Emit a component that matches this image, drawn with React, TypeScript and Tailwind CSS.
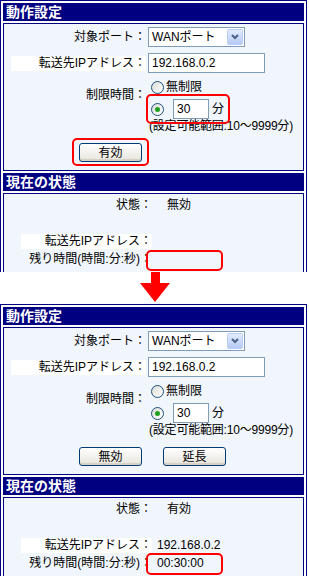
const font = "font-['Liberation_Sans','Noto_Sans_CJK_JP',sans-serif]"

function Header({ title }: { title: string }) {
    return (
        <div className="h-[18px] bg-[#000080] pl-[3px] text-[14px] font-bold leading-[18px] text-white">
            {title}
        </div>
    )
}

function Select() {
    return (
        <div className="flex h-[20px] w-[97px] items-center border border-[#7f9db9] bg-white pl-[3px] text-[12px]">
            <span className="flex-1">WANポート</span>
            <span className="mr-[1px] flex h-[16px] w-[16px] items-center justify-center rounded-[2px] border border-[#b9cdf5] bg-gradient-to-b from-[#e3ecfe] to-[#b6caf7]">
                <svg width="8" height="6" viewBox="0 0 8 6">
                    <path d="M1 1 L4 4 L7 1" fill="none" stroke="#4d6185" strokeWidth="2" />
                </svg>
            </span>
        </div>
    )
}

function TextBox({ value, width }: { value: string; width: string }) {
    return (
        <div className={`h-[20px] border border-[#7f9db9] bg-white pl-[3px] text-[12px] leading-[18px] ${width}`}>
            {value}
        </div>
    )
}

function Radio({ checked }: { checked?: boolean }) {
    return (
        <span className="flex h-[13px] w-[13px] items-center justify-center rounded-full border border-[#1c5180] bg-gradient-to-br from-[#dcdcd5] to-white">
            {checked && <span className="h-[5px] w-[5px] rounded-full bg-[#21a121]" />}
        </span>
    )
}

function Button({ label, hidden }: { label: string; hidden?: boolean }) {
    return (
        <div
            className={`flex h-[19px] w-[63px] items-center justify-center rounded-[3px] border border-[#003c74] bg-gradient-to-b from-white to-[#e6e4dc] text-[12px] shadow-[inset_0_-2px_0_#d8d2c6] ${hidden ? 'invisible' : ''}`}
        >
            {label}
        </div>
    )
}

function SettingsBox({ active }: { active: boolean }) {
    return (
        <div className="border border-[#000080] bg-[#f1f6fc] pb-[8px] pt-[3px] text-[12px]">
            <div className="flex h-[20px] items-center">
                <span className="w-[142px] text-right">対象ポート：</span>
                <div className="ml-[2px]"><Select /></div>
            </div>
            <div className="mt-[6px] flex h-[20px] items-center">
                <span className="flex w-[142px] justify-end">
                    <span className="bg-white pl-[28px] leading-[15px]">転送先IPアドレス：</span>
                </span>
                <div className="ml-[2px]"><TextBox value="192.168.0.2" width="w-[117px]" /></div>
            </div>
            <div className="mt-[6px] flex">
                <span className="w-[142px] pt-[9px] text-right leading-[14px]">制限時間：</span>
                <div className="ml-[2px]">
                    <div className="flex h-[16px] items-center gap-[2px] pl-[3px]">
                        <Radio />
                        <span>無制限</span>
                    </div>
                    <div className="mt-[4px] flex h-[20px] items-center pl-[3px]">
                        <Radio checked />
                        <div className="ml-[9px]"><TextBox value="30" width="w-[36px]" /></div>
                        <span className="ml-[3px]">分</span>
                    </div>
                    <div className="h-[14px] pl-[1px] leading-[14px] tracking-[-0.2px]">(設定可能範囲:10～9999分)</div>
                </div>
            </div>
            <div className="mt-[10px] flex justify-center gap-[21px] pr-[2px]">
                <Button label={active ? '無効' : '有効'} />
                <Button label="延長" hidden={!active} />
            </div>
        </div>
    )
}

function StatusBox({ active }: { active: boolean }) {
    return (
        <div className="border border-[#000080] bg-[#f1f6fc] pb-[10px] pt-[2px] text-[12px] leading-[18px]">
            <div className="flex h-[18px]">
                <span className="w-[148px] text-right">状態：</span>
                <span className="ml-[15px]">{active ? '有効' : '無効'}</span>
            </div>
            <div className="h-[18px]" />
            <div className="flex h-[18px] items-center">
                <span className="flex w-[148px] justify-end">
                    <span className="bg-white pl-[24px] leading-[15px]">転送先IPアドレス：</span>
                </span>
                <span className="ml-[5px]">{active ? '192.168.0.2' : ''}</span>
            </div>
            <div className="flex h-[18px]">
                <span className="w-[148px] text-right">残り時間(時間:分:秒)：</span>
                <span className="ml-[5px]">{active ? '00:30:00' : ''}</span>
            </div>
        </div>
    )
}

function Panel({ active }: { active: boolean }) {
    return (
        <div className="flex w-[307px] flex-col gap-[2px] border border-[#000080] bg-white p-[2px]">
            <Header title="動作設定" />
            <SettingsBox active={active} />
            <Header title="現在の状態" />
            <StatusBox active={active} />
        </div>
    )
}

function RedBox({ className }: { className: string }) {
    return <div className={`absolute rounded-[5px] border-[2px] border-[#ff0000] ${className}`} />
}

export default function App() {
    return (
        <div className={`relative h-[576px] w-[309px] overflow-hidden bg-white text-black ${font}`}>
            <div className="h-[272px] overflow-hidden">
                <Panel active={false} />
            </div>
            <div className="flex h-[32px] justify-center">
                <svg width="30" height="31" viewBox="0 0 30 31">
                    <rect x="11" y="0" width="9" height="12" fill="#ff0000" />
                    <path d="M0 11 L30 11 L15 30 Z" fill="#ff0000" />
                </svg>
            </div>
            <Panel active={true} />

            <RedBox className="left-[146px] top-[94px] h-[30px] w-[84px]" />
            <RedBox className="left-[72px] top-[138px] h-[28px] w-[77px]" />
            <RedBox className="left-[146px] top-[250px] h-[21px] w-[77px]" />
            <RedBox className="left-[146px] top-[553px] h-[22px] w-[77px]" />
        </div>
    )
}
